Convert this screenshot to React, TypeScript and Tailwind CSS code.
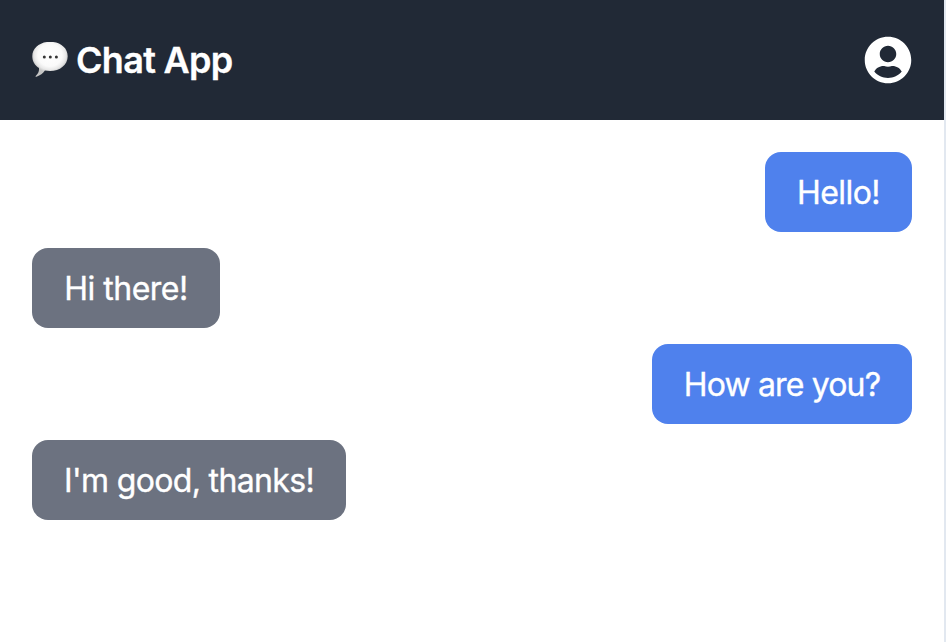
import { FaUserCircle } from "react-icons/fa";

const messages = [
  { text: "Hello!", mine: true, width: "w-[147px]", tracking: "tracking-[-0.55px]" },
  { text: "Hi there!", mine: false, width: "w-[188px]", tracking: "tracking-[-0.5px]" },
  { text: "How are you?", mine: true, width: "w-[260px]", tracking: "tracking-[-0.85px]" },
  { text: "I'm good, thanks!", mine: false, width: "w-[314px]", tracking: "tracking-[-0.65px]" },
];

function SpeechBalloon() {
  return (
    <svg className="h-9 w-9 shrink-0" viewBox="0 0 36 36" aria-hidden="true">
      <defs>
        <radialGradient id="balloon" gradientUnits="userSpaceOnUse" cx="0" cy="0" r="1" gradientTransform="translate(18 13) scale(18.5 17.5)">
          <stop offset="0" stopColor="#ffffff" />
          <stop offset="0.65" stopColor="#fafafa" />
          <stop offset="0.85" stopColor="#e8e8e8" />
          <stop offset="1" stopColor="#c4c4c4" />
        </radialGradient>
      </defs>
      <path
        d="M18 -.2C8 -.2 .3 5.8 .3 14.2c0 5.1 2.5 9.3 6.7 11.8.3 3-.9 5.7-3.1 7.7-.8.8-.3 1.3.6 1 3.7-1 6.6-3.3 8.4-6.1 1.6.3 3.3.4 5.1.4 10 0 17.7-6.2 17.7-14.8S28-.2 18-.2z"
        fill="url(#balloon)"
      />
      <circle cx="12.3" cy="15" r="1.5" fill="#353535" />
      <circle cx="18.3" cy="15" r="1.5" fill="#353535" />
      <circle cx="24.4" cy="15" r="1.5" fill="#353535" />
    </svg>
  );
}

export default function App() {
  return (
    <div className="flex h-screen flex-col overflow-hidden border-r-2 border-[#e2e8f0] bg-white font-['Inter','Liberation_Sans',sans-serif] text-white">
      <header className="flex h-[120px] shrink-0 items-center justify-between bg-[#212936] px-8">
        <h1 className="flex items-center gap-2 text-[36px] leading-[56px] font-semibold tracking-[-0.7px] whitespace-nowrap">
          <SpeechBalloon />
          <span className="[-webkit-text-stroke:0.3px_white]">Chat App</span>
        </h1>
        <FaUserCircle className="h-12 w-12" />
      </header>
      <main className="flex flex-1 flex-col gap-4 p-8">
        {messages.map((message) => (
          <div
            key={message.text}
            className={`flex h-20 shrink-0 items-center justify-center rounded-2xl pt-0.5 text-[32px] leading-[48px] whitespace-nowrap [-webkit-text-stroke:0.35px_white] ${message.width} ${message.tracking} ${
              message.mine ? "self-end bg-[#4f81ed]" : "self-start bg-[#6c7280]"
            }`}
          >
            {message.text}
          </div>
        ))}
      </main>
    </div>
  );
}
